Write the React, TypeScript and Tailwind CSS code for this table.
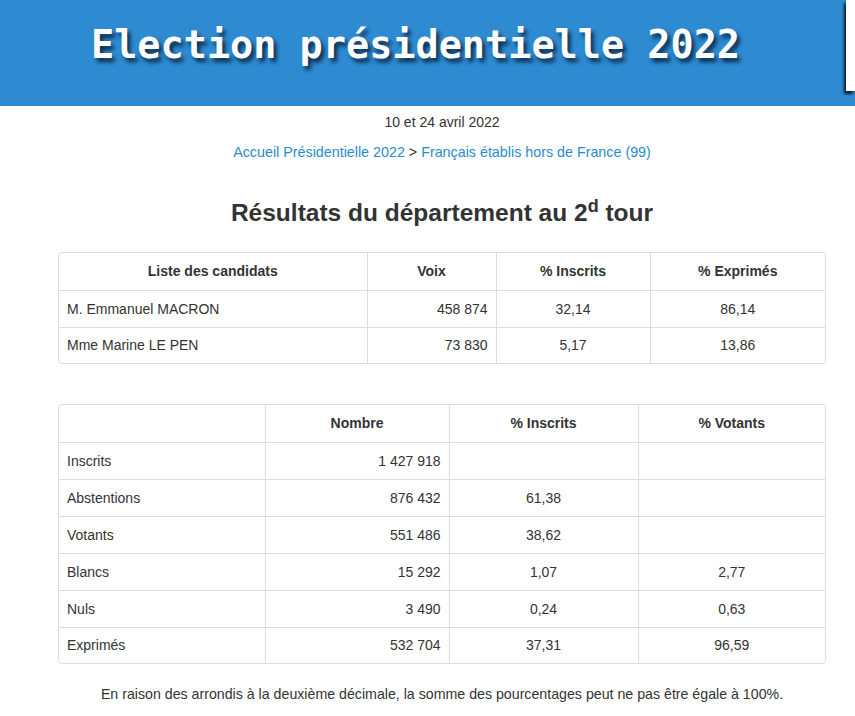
const candidats = [
  { nom: "M. Emmanuel MACRON", voix: "458 874", inscrits: "32,14", exprimes: "86,14" },
  { nom: "Mme Marine LE PEN", voix: "73 830", inscrits: "5,17", exprimes: "13,86" },
]

const stats = [
  { label: "Inscrits", nombre: "1 427 918", inscrits: "", votants: "" },
  { label: "Abstentions", nombre: "876 432", inscrits: "61,38", votants: "" },
  { label: "Votants", nombre: "551 486", inscrits: "38,62", votants: "" },
  { label: "Blancs", nombre: "15 292", inscrits: "1,07", votants: "2,77" },
  { label: "Nuls", nombre: "3 490", inscrits: "0,24", votants: "0,63" },
  { label: "Exprimés", nombre: "532 704", inscrits: "37,31", votants: "96,59" },
]

const cell = "border-[#dddddd] border-r border-b last:border-r-0 px-2 py-0 h-[37px]"

export default function App() {
  return (
    <div className="min-h-screen bg-white text-[#333333] text-[14px] leading-5" style={{ fontFamily: '"Liberation Sans", Arial, sans-serif' }}>
      <header className="relative h-[106px] bg-[#2e8bd2]">
        <h1
          className="pl-[91px] pt-[22px] text-[38.5px] leading-[46px] font-bold text-white"
          style={{ fontFamily: '"DejaVu Sans Mono", monospace', textShadow: "3px 4px 4px #0b2a4a" }}
        >
          Election présidentielle 2022
        </h1>
        <div className="absolute right-0 top-0 w-[9px] h-[91px] bg-white shadow-[-2px_3px_3px_rgba(0,0,0,0.8)]" />
      </header>

      <main className="ml-[58px] w-[768px] text-center">
        <p className="mt-[6px]">10 et 24 avril 2022</p>
        <p className="mt-[10px] text-[14.3px]">
          <a className="text-[#2a8ccd]">Accueil Présidentielle 2022</a> &gt;{" "}
          <a className="text-[#2a8ccd]">Français établis hors de France (99)</a>
        </p>

        <h2 className="mt-[38px] text-[24.5px] leading-[26px] font-bold">
          Résultats du département au 2<sup className="text-[18px]">d</sup> tour
        </h2>

        <div className="mt-[26px] border border-[#dddddd] rounded-[4px] overflow-hidden">
          <table className="w-full border-collapse table-fixed">
            <colgroup>
              <col className="w-[308px]" />
              <col className="w-[129px]" />
              <col className="w-[154px]" />
              <col />
            </colgroup>
            <thead>
              <tr className="font-bold">
                <th className={cell + " text-center"}>Liste des candidats</th>
                <th className={cell + " text-center"}>Voix</th>
                <th className={cell + " text-center"}>% Inscrits</th>
                <th className={cell + " text-center"}>% Exprimés</th>
              </tr>
            </thead>
            <tbody>
              {candidats.map((c, i) => (
                <tr key={c.nom} className={i === candidats.length - 1 ? "[&>td]:border-b-0 [&>td]:h-[36px]" : ""}>
                  <td className={cell + " text-left"}>{c.nom}</td>
                  <td className={cell + " text-right"}>{c.voix}</td>
                  <td className={cell + " text-center"}>{c.inscrits}</td>
                  <td className={cell + " text-center"}>{c.exprimes}</td>
                </tr>
              ))}
            </tbody>
          </table>
        </div>

        <div className="mt-[40px] border border-[#dddddd] rounded-[4px] overflow-hidden">
          <table className="w-full border-collapse table-fixed">
            <colgroup>
              <col className="w-[206px]" />
              <col className="w-[184px]" />
              <col className="w-[189px]" />
              <col />
            </colgroup>
            <thead>
              <tr className="font-bold">
                <th className={cell}></th>
                <th className={cell + " text-center"}>Nombre</th>
                <th className={cell + " text-center"}>% Inscrits</th>
                <th className={cell + " text-center"}>% Votants</th>
              </tr>
            </thead>
            <tbody>
              {stats.map((s, i) => (
                <tr key={s.label} className={i === stats.length - 1 ? "[&>td]:border-b-0 [&>td]:h-[36px]" : ""}>
                  <td className={cell + " text-left"}>{s.label}</td>
                  <td className={cell + " text-right"}>{s.nombre}</td>
                  <td className={cell + " text-center"}>{s.inscrits}</td>
                  <td className={cell + " text-center"}>{s.votants}</td>
                </tr>
              ))}
            </tbody>
          </table>
        </div>

        <p className="mt-[20px] text-[14.2px]">
          En raison des arrondis à la deuxième décimale, la somme des pourcentages peut ne pas être égale à 100%.
        </p>
      </main>
    </div>
  )
}
